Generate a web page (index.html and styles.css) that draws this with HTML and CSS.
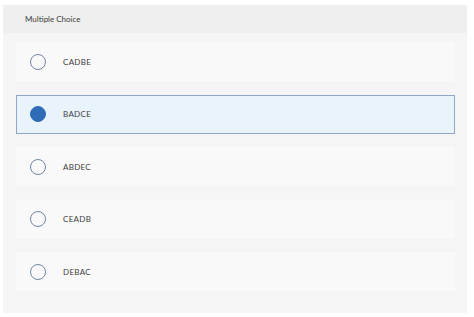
FILE: index.html
```html
<!DOCTYPE html>
<html lang="en">
<head>
    <meta charset="UTF-8">
    <title>Multiple Choice</title>
    <link rel="stylesheet" href="styles.css">
</head>
<body>
    <div class="panel">
        <div class="panel-header">Multiple Choice</div>
        <div class="options">
            <label class="option">
                <span class="radio"></span>
                <span class="option-text">CADBE</span>
            </label>
            <label class="option selected">
                <span class="radio"></span>
                <span class="option-text">BADCE</span>
            </label>
            <label class="option">
                <span class="radio"></span>
                <span class="option-text">ABDEC</span>
            </label>
            <label class="option">
                <span class="radio"></span>
                <span class="option-text">CEADB</span>
            </label>
            <label class="option">
                <span class="radio"></span>
                <span class="option-text">DEBAC</span>
            </label>
        </div>
    </div>
</body>
</html>
```
FILE: styles.css
```css
body {
    margin: 0;
    background-color: white;
    font-family: Lato, 'Open Sans', sans-serif;
    color: #3c3c3c;
}
.panel {
    margin: 5px 7px 0 3px;
    height: 308px;
    background-color: #f5f5f5;
    display: flex;
    flex-direction: column;
}
.panel-header {
    height: 28px;
    padding-left: 22px;
    display: flex;
    align-items: center;
    font-size: 8px;
    background-color: #efefef;
}
.options {
    padding: 9px 12px 0 13px;
    display: flex;
    flex-direction: column;
    gap: 13.5px;
}
.option {
    height: 37px;
    border: 1px solid transparent;
    background-color: #f9f9f9;
    display: flex;
    align-items: center;
    font-size: 8px;
}
.option.selected {
    background-color: #e9f3fc;
    border-color: #8fa6c4;
}
.radio {
    width: 14px;
    height: 14px;
    border: 1.2px solid #6f87a6;
    border-radius: 50%;
    margin-left: 13px;
    margin-right: 17px;
    box-sizing: content-box;
}
.option.selected .radio {
    background-color: #2f6cb8;
    border-color: #2f6cb8;
}
.option-text {
    letter-spacing: 0.3px;
}
```
